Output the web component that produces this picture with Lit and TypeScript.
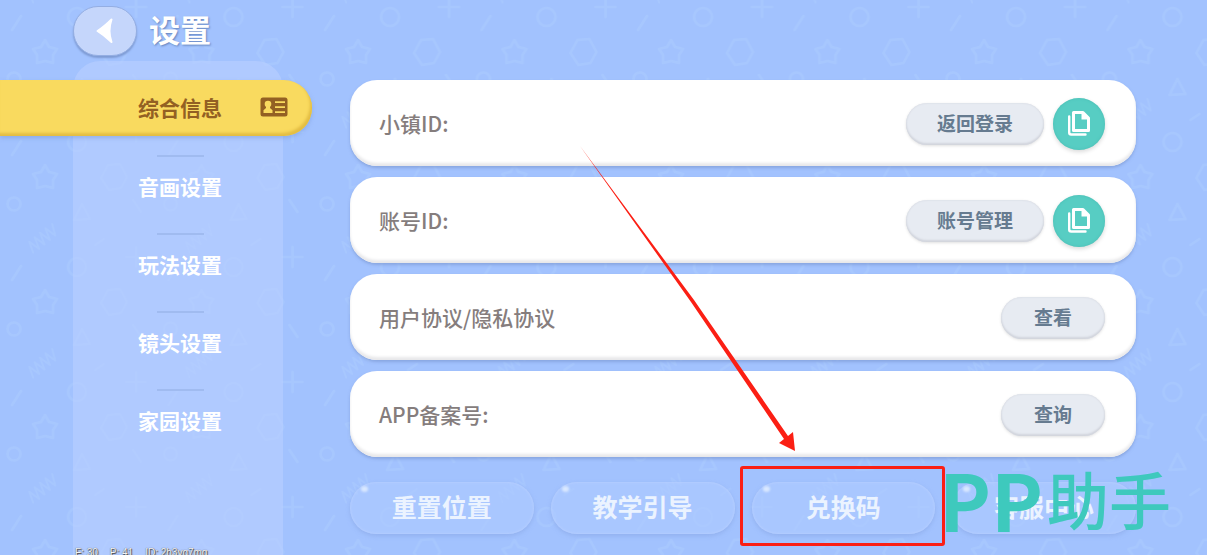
import { LitElement, html, css, svg } from "lit";
import { customElement, property } from "lit/decorators.js";
import { classMap } from "lit/directives/class-map.js";

const FONT = css`"Noto Sans CJK SC", sans-serif`;

/** Tiled doodle wallpaper. */
@customElement("doodle-wallpaper")
class DoodleWallpaper extends LitElement {
  static styles = css`
    :host { display: block; }
    svg { display: block; width: 100%; height: 100%; }
  `;
  render() {
    const squiggle = (y: number) => svg`
      <path stroke-width="1.8" transform="translate(43 ${y}) rotate(-40)" d="M-17 5L-13 -6L-10 6L-6 -6L-3 6L1 -6L4 6L8 -6L11 6L16 -5"/>`;
    return html`
      <svg aria-hidden="true">
        <defs>
          <pattern id="tile" width="156.5" height="125" y="1" patternUnits="userSpaceOnUse">
            <g fill="none" stroke="#b4d6ff" stroke-opacity=".3" stroke-width="2.6" stroke-linecap="round" stroke-linejoin="round">
              <path d="M45 39L49 46L57 48L53 54L53 62L45 60L37 62L37 54L33 48L41 46Z"/>
              <path d="M108 39L120 38L127 51L121 62L109 64L101 52Z"/>
              <circle cx="14" cy="78" r="6.5"/>
              <path d="M82 78L90 93L74 94Z"/>
              <path d="M133 74L141 86M95 119L104 113M12 29L21 15"/>
              <circle cx="77" cy="16" r="9"/>
              <path d="M136 -4V16M126 6H146M136 121V141"/>
              ${squiggle(112)}${squiggle(-13)}
            </g>
          </pattern>
        </defs>
        <rect width="100%" height="100%" fill="url(#tile)"/>
      </svg>`;
  }
}

/** Left-hand category list. */
@customElement("settings-nav")
class SettingsNav extends LitElement {
  @property({ type: Array }) items: string[] = [];
  @property({ type: Number }) active = 0;
  static styles = css`
    :host { display: block; }
    ul { list-style: none; margin: 0; padding: 0; }
    li + li { padding-top: 19px; }
    li + li::before { content: ""; display: block; width: 47px; height: 2px; margin-left: 84px; background: #a0bbf0; }
    a { display: flex; align-items: center; height: 57px; padding-left: 65px; color: #fff; font: 700 21px/32px ${FONT}; text-decoration: none; }
    .active {
      box-sizing: border-box; height: 56px; justify-content: space-between; margin: 0 -29px 0 -73px; padding: 0 24px 3px 138px; color: #936023;
      background: #f9da5f; border-radius: 0 28px 28px 0;
      box-shadow: inset -2px -3px 3px #e3bd43, 0 2px 4px #6f8fc966;
    }
  `;
  render() {
    return html`<nav><ul>${this.items.map((label, i) => html`
      <li><a href="#" class=${classMap({ active: i === this.active })}>${label}${i === this.active ? html`
        <svg width="28" height="20" viewBox="0 0 28 20" aria-hidden="true">
          <rect x=".5" y=".5" width="27" height="19" rx="2.5" fill="#936023"/>
          <circle cx="8" cy="7" r="3.3" fill="#f9da5f"/>
          <path d="M6 8h4v3l2.5 2.2V16h-9v-2.8L6 11Z" fill="#f9da5f"/>
          <path d="M15 5.2h10M15 10.2h10M15 15.2h10" stroke="#f9da5f" stroke-width="1.8"/>
        </svg>` : ""}</a></li>`)}</ul></nav>`;
  }
}

/** White card with a label and its actions. */
@customElement("settings-row")
class SettingsRow extends LitElement {
  @property() label = "";
  @property() action = "";
  @property({ type: Boolean }) copy = false;
  static styles = css`
    :host {
      display: flex; align-items: center; gap: 9px; box-sizing: border-box; min-height: 86px; padding: 2px 31px 0 29px;
      background: #fff; border-radius: 27px; box-shadow: inset 0 -3px 3px #e8e8ea, 0 2px 3px #6f8cc680;
    }
    .label { flex: 1; padding-bottom: 2px; color: #857d7d; font: 500 21px/30px ${FONT}; }
    button { border: 0; padding: 0; cursor: pointer; }
    .pill {
      min-width: 104px; height: 42px; padding: 0 31px 2px; border-radius: 21px; color: #667b90; background: #e7ebf2;
      font: 700 19px/28px ${FONT}; box-shadow: inset 0 -2px 2px #d2d5dd, inset 0 0 2px #cfd3dc, 0 1px 3px #0000001f;
    }
    .copy {
      display: grid; place-items: center; width: 52px; height: 52px; border-radius: 50%; background: #57cdc3;
      box-shadow: inset 0 0 3px #48bdb3, 0 2px 4px #00000026;
    }
  `;
  render() {
    return html`
      <span class="label">${this.label}</span>
      <button class="pill">${this.action}</button>
      ${this.copy ? html`<button class="copy" aria-label="复制">
        <svg width="24" height="28" viewBox="0 0 24 28" fill="none" stroke="#fff" aria-hidden="true">
          <path d="M6.500 2.500H16L21.500 8V20.500H6.500Z" stroke-width="3" stroke-linejoin="round"/>
          <path d="M14.500 2v7.500H22Z" fill="#fff" stroke="none"/>
          <path d="M2.200 6.500V22.500q0 2 2 2H18.500" stroke-width="2.400" stroke-linecap="round"/>
        </svg></button>` : ""}`;
  }
}

@customElement("app-root")
class AppRoot extends LitElement {
  static styles = css`
    :host {
      display: grid; grid-template: auto 1fr / auto 1fr; column-gap: 67px; position: relative; overflow: hidden;
      box-sizing: border-box; min-height: 100vh; background: #a2c2fe; font-family: ${FONT};
    }
    .wallpaper { position: absolute; inset: 0; }
    header { position: relative; grid-column: 1 / -1; display: flex; align-items: center; gap: 12px; height: 61px; padding-left: 73px; }
    .back {
      display: grid; place-items: center; width: 64px; height: 50px; padding: 0; border: 1px solid #94aee3; border-radius: 25px;
      background: #c5d6fb; box-shadow: 0 2px 2px #7e9bd4; cursor: pointer;
    }
    h1 { margin: 0; padding-bottom: 4px; color: #fff; font: 700 31px/46px ${FONT}; text-shadow: 1px 1px 2px #6585be; }
    .side { position: relative; width: 210px; margin-left: 73px; padding-top: 19px; box-sizing: border-box; background: #b9ceff99; border-radius: 27px 27px 0 0; }
    main { position: relative; display: flex; flex-direction: column; gap: 11px; padding: 19px 71px 21px 0; }
    .actions { display: grid; grid-template-columns: repeat(4, 1fr); gap: 17px; padding-top: 14px; }
    .cell { position: relative; display: grid; }
    .soft {
      position: relative; height: 52px; border: 0; border-radius: 26px; padding: 0 0 4px; color: #ebf3ff; background: #adc9ff99; cursor: pointer;
      font: 700 25px/36px ${FONT}; box-shadow: inset 0 0 3px #bdd2ff, 0 2px 4px #8caae8aa;
    }
    .soft::before { content: ""; position: absolute; left: 11px; top: 4px; width: 7px; height: 6px; border-radius: 50%; background: #d9e8ff; filter: blur(1px); }
    .frame { position: absolute; inset: -16px -10px -12px -12px; border: 3px solid #fb1f14; border-radius: 3px; pointer-events: none; }
    .arrow { position: absolute; left: -174px; bottom: 82px; pointer-events: none; }
    .brand { position: absolute; right: 36px; bottom: 14px; display: flex; align-items: center; gap: 4px; color: #3ec9bd; font: 500 62px/86px ${FONT}; pointer-events: none; }
    .latin { font: 700 78px/86px ${FONT}; }
    .debug { position: absolute; left: 75px; bottom: -4px; display: flex; gap: 12px; color: #f4f4f4; font: 10px/12px "Liberation Sans", sans-serif; text-shadow: 0 0 1px #444, 1px 1px 1px #444; }
  `;
  rows = [
    { label: "小镇ID:", action: "返回登录", copy: true },
    { label: "账号ID:", action: "账号管理", copy: true },
    { label: "用户协议/隐私协议", action: "查看", copy: false },
    { label: "APP备案号:", action: "查询", copy: false },
  ];
  actions = ["重置位置", "教学引导", "兑换码", "客服中心"];
  render() {
    return html`
      <doodle-wallpaper class="wallpaper"></doodle-wallpaper>
      <header>
        <button class="back" aria-label="返回">
          <svg width="18" height="26" viewBox="0 0 18 26" aria-hidden="true">
            <path d="M15.500 1.500Q11.500 13 15.500 24Q8 17 1.500 13Q8 9 15.500 1.500Z" fill="#fff" stroke="#fff" stroke-width="2" stroke-linejoin="round"/>
          </svg>
        </button>
        <h1>设置</h1>
      </header>
      <div class="side">
        <settings-nav .items=${["综合信息", "音画设置", "玩法设置", "镜头设置", "家园设置"]}></settings-nav>
      </div>
      <main>
        ${this.rows.map((r) => html`<settings-row .label=${r.label} .action=${r.action} .copy=${r.copy}></settings-row>`)}
        <div class="actions">
          ${this.actions.map((a) => html`<div class="cell"><button class="soft">${a}</button>${a === "兑换码" ? html`
            <span class="frame"></span>
            <svg class="arrow" width="218" height="306" viewBox="0 0 218 306" aria-hidden="true">
              <path d="M2 0L116 154L210 290L215 286L217 305L201 297L206 293L113 156Z" fill="#fb1f14"/>
            </svg>` : ""}</div>`)}
        </div>
      </main>
      <div class="brand"><span class="latin">PP</span><span>助手</span></div>
      <div class="debug"><span>F: 30</span><span>P: 41</span><span>ID: 2h3yg7mq</span></div>
    `;
  }
}
